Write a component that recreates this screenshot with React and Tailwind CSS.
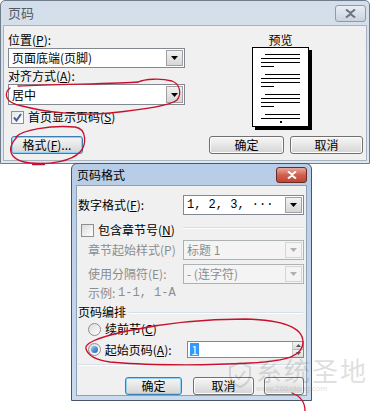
import React from "react";

const F = { fontFamily: '"Noto Sans CJK SC", "Liberation Sans", sans-serif' };

function WinBtn({ children, w, focus }) {
  return (
    <div
      className={`h-[18px] flex items-center justify-center rounded-[3px] border text-[12px] leading-none text-black bg-gradient-to-b from-[#f6f6f6] via-[#e6e6e6] to-[#d4d4d4] ${
        focus ? "border-[#3c7fb1] shadow-[inset_0_0_0_1px_#8fd0f4]" : "border-[#707070] shadow-[inset_0_0_0_1px_#fcfcfc]"
      }`}
      style={{ width: w }}
    >
      {children}
    </div>
  );
}

function Combo({ text, w, h = 20, disabled, mono }) {
  return (
    <div
      className={`flex items-stretch border ${disabled ? "border-[#adb2b5] bg-[#f4f4f4]" : "border-[#828790] bg-white"}`}
      style={{ width: w, height: h }}
    >
      <div
        className={`flex-1 flex items-center pl-[3px] text-[12px] leading-none ${disabled ? "text-[#8d8d8d]" : "text-black"}`}
        style={mono ? { fontFamily: '"Liberation Mono", "Noto Sans CJK SC", monospace' } : undefined}
      >
        {text}
      </div>
      <div
        className={`w-[17px] m-[1px] flex items-center justify-center border ${
          disabled ? "border-[#d5d5d5] bg-[#f4f4f4]" : "border-[#a0a0a0] bg-gradient-to-b from-[#f2f2f2] to-[#d6d6d6]"
        }`}
      >
        <svg width="7" height="4" viewBox="0 0 7 4">
          <path d="M0 0H7L3.5 4Z" fill={disabled ? "#b0b0b0" : "#000"} />
        </svg>
      </div>
    </div>
  );
}

function PagePreview() {
  const groups = [7, 27, 47];
  return (
    <div className="w-[57px] h-[80px] bg-white border border-black shadow-[3px_3px_0_0_#000]">
      <svg width="55" height="78" viewBox="0 0 55 78">
        <g stroke="#000" strokeWidth="1">
          {groups.map((y) => (
            <g key={y}>
              <line x1="12" y1={y - 0.5} x2="47" y2={y - 0.5} />
              <line x1="8" y1={y + 3.5} x2="47" y2={y + 3.5} />
              <line x1="8" y1={y + 7.5} x2="47" y2={y + 7.5} />
              <line x1="8" y1={y + 11.5} x2="21" y2={y + 11.5} />
            </g>
          ))}
          <line x1="12" y1="66.5" x2="47" y2="66.5" />
          <line x1="8" y1="70.5" x2="47" y2="70.5" />
        </g>
        <rect x="27" y="73" width="2" height="2" fill="#000" />
      </svg>
    </div>
  );
}

function U({ c }) {
  return <span className="underline">{c}</span>;
}

function TopDialog() {
  return (
    <div className="absolute left-0 top-0 w-[370px] h-[164px] border border-[#6f7c8b] rounded-t-[5px] bg-gradient-to-b from-[#d3deea] to-[#dfe7f0] flex flex-col">
      <div className="h-[24px] flex items-center justify-between pl-[7px] pr-[3px]">
        <span className="text-[13px] text-[#4f5a66]">页码</span>
        <div className="w-[31px] h-[17px] rounded-[3px] border border-[#8e9aa8] bg-gradient-to-b from-[#e9eef4] to-[#c9d3de] flex items-center justify-center">
          <svg width="11" height="9" viewBox="0 0 11 9">
            <path d="M1 0.5L5.5 4L10 0.5M1 8.5L5.5 5L10 8.5" stroke="#68737f" strokeWidth="2" fill="none" />
          </svg>
        </div>
      </div>
      <div className="flex-1 mx-[2px] mb-[2px] bg-[#f0f0f0] border border-[#a7b3c0] flex flex-col">
        <div className="flex">
          <div className="w-[181px] pl-[4px] pt-[7px] flex flex-col">
            <div className="h-[14px] flex items-center text-[12px] leading-none">位置(<U c="P" />):</div>
            <div className="mt-[1px]">
              <Combo text="页面底端(页脚)" w={177} />
            </div>
            <div className="mt-[1px] h-[14px] flex items-center text-[12px] leading-none">对齐方式(<U c="A" />):</div>
            <div className="mt-[1px]">
              <Combo text="居中" w={177} h={21} />
            </div>
            <div className="mt-[5px] h-[14px] flex items-center pl-[3px] text-[12px] leading-none">
              <div className="w-[13px] h-[13px] border border-[#8e8f8f] bg-gradient-to-br from-[#e4e6e8] to-white flex items-center justify-center">
                <svg width="9" height="9" viewBox="0 0 9 9">
                  <path d="M1 4.5L3.5 7.5L8 1" stroke="#4a5f97" strokeWidth="2" fill="none" />
                </svg>
              </div>
              <span className="ml-[4px]">首页显示页码(<U c="S" />)</span>
            </div>
          </div>
          <div className="ml-[67px] w-[60px] pt-[7px] flex flex-col items-start">
            <div className="w-[57px] h-[14px] flex items-center justify-center text-[12px] leading-none">预览</div>
            <PagePreview />
          </div>
        </div>
        <div className="mt-[9px] flex items-center pl-[7px]">
          <WinBtn w={72} focus>
            格式(<U c="F" />)...
          </WinBtn>
          <div className="ml-[126px]">
            <WinBtn w={75}>确定</WinBtn>
          </div>
          <div className="ml-[6px]">
            <WinBtn w={73}>取消</WinBtn>
          </div>
        </div>
      </div>
    </div>
  );
}

function Sep({ className = "" }) {
  return <div className={`h-[2px] border-t border-[#d5dfe5] border-b border-b-white ${className}`} />;
}

function Radio({ checked }) {
  return (
    <div className="w-[13px] h-[13px] rounded-full border border-[#8e8f8f] bg-gradient-to-br from-[#dcdcdc] to-white flex items-center justify-center">
      {checked && <div className="w-[7px] h-[7px] rounded-full bg-gradient-to-br from-[#8fd0ff] to-[#1b5fa8]" />}
    </div>
  );
}

function FormatDialog() {
  const lbl = "text-[12px] leading-none";
  return (
    <div className="absolute left-[71px] top-[163px] w-[241px] h-[238px] border border-[#4a5563] rounded-t-[6px] bg-gradient-to-b from-[#b7cce6] to-[#cadbee] flex flex-col">
      <div className="h-[21px] flex items-center justify-between pl-[5px] pr-[4px]">
        <span className="text-[12px] text-black">页码格式</span>
        <div className="w-[31px] h-[16px] rounded-[3px] border border-[#6d2a22] bg-gradient-to-b from-[#e8a89c] via-[#d0604f] to-[#c04434] flex items-center justify-center">
          <svg width="10" height="8" viewBox="0 0 10 8">
            <path d="M1 0.5L5 3.5L9 0.5M1 7.5L5 4.5L9 7.5" stroke="#fff" strokeWidth="2" fill="none" />
          </svg>
        </div>
      </div>
      <div className="flex-1 mx-[4px] mb-[4px] bg-[#f0f0f0] border border-[#8ea1b8] flex flex-col pl-[1px] pr-[2px] overflow-hidden">
        <div className="mt-[9px] flex items-center">
          <div className={`w-[105px] ${lbl}`}>数字格式(<U c="F" />):</div>
          <Combo text="1, 2, 3, ···" w={121} mono />
        </div>
        <div className="mt-[6px] h-[18px] flex items-center">
          <div className="w-[105px] flex items-center pl-[3px]">
            <div className="w-[13px] h-[13px] border border-[#8e8f8f] bg-gradient-to-br from-[#dcdcdc] to-white" />
            <span className={`ml-[4px] ${lbl}`}>包含章节号(<U c="N" />)</span>
          </div>
          <Sep className="w-[121px] mt-[-5px]" />
        </div>
        <div className="mt-[1px] flex items-center">
          <div className={`w-[105px] pl-[10px] text-[#8d8d8d] ${lbl}`}>章节起始样式(P)</div>
          <Combo text="标题 1" w={121} disabled />
        </div>
        <div className="mt-[4px] flex items-center">
          <div className={`w-[105px] pl-[10px] text-[#8d8d8d] ${lbl}`}>使用分隔符(E):</div>
          <Combo text="-  (连字符)" w={121} disabled />
        </div>
        <div className={`mt-[2px] h-[14px] flex items-center pl-[10px] text-[#8d8d8d] ${lbl}`}>
          示例:&nbsp;<span style={{ fontFamily: '"Liberation Mono", monospace' }}>1-1, 1-A</span>
        </div>
        <div className="mt-[5px] h-[14px] flex items-center">
          <span className={lbl}>页码编排</span>
          <Sep className="flex-1 ml-[3px] mt-[2px] mr-[1px]" />
        </div>
        <div className="mt-[3px] h-[14px] flex items-center pl-[10px]">
          <Radio />
          <span className={`ml-[4px] ${lbl}`}>续前节(<U c="C" />)</span>
        </div>
        <div className="mt-[5px] h-[17px] flex items-center pl-[10px]">
          <Radio checked />
          <span className={`ml-[4px] w-[84px] ${lbl}`}>起始页码(<U c="A" />):</span>
          <div className="w-[119px] h-[17px] border border-[#828790] bg-white flex">
            <div className="flex-1 flex items-center pl-[2px]">
              <span className="bg-[#3399ff] text-white text-[12px] leading-[13px] px-[1px]">1</span>
            </div>
            <div className="w-[11px] flex flex-col border-l border-[#c8c8c8]">
              <div className="flex-1 bg-gradient-to-b from-[#f4f4f4] to-[#dcdcdc] border-b border-[#b4b4b4] flex items-center justify-center">
                <svg width="5" height="3" viewBox="0 0 5 3"><path d="M0 3H5L2.5 0Z" fill="#555" /></svg>
              </div>
              <div className="flex-1 bg-gradient-to-b from-[#f4f4f4] to-[#dcdcdc] flex items-center justify-center">
                <svg width="5" height="3" viewBox="0 0 5 3"><path d="M0 0H5L2.5 3Z" fill="#555" /></svg>
              </div>
            </div>
          </div>
        </div>
        <Sep className="mt-[6px]" />
        <div className="mt-[11px] flex items-center pl-[47px]">
          <WinBtn w={71} focus>确定</WinBtn>
          <div className="ml-[11px]">
            <WinBtn w={61}>取消</WinBtn>
          </div>
          <div className="ml-[10px] shrink-0">
            <WinBtn w={40}>{""}</WinBtn>
          </div>
        </div>
      </div>
    </div>
  );
}

function Annotations() {
  return (
    <svg className="absolute left-0 top-0 pointer-events-none" width="372" height="411" viewBox="0 0 372 411">
      <g fill="none" stroke="#c8102e" strokeWidth="1.3" strokeLinecap="round">
        <path d="M10 88 C 4 93, 4 103, 22 106 C 45 112, 80 116, 110 113 C 140 110, 170 106, 177 100 C 182 94, 180 84, 172 81 C 160 78, 145 79, 138 82" />
        <path d="M138 82 C 120 84, 60 84, 18 86" />
        <path d="M16 137 C 22 130, 50 125, 75 127 C 88 129, 86 146, 80 152 C 72 161, 50 165, 30 163 C 12 161, 8 152, 12 144 C 14 140, 16 138, 17 137" />
        <path d="M33 164 L 44 164" strokeWidth="2.5" />
        <path d="M86 349 C 84 344, 95 338, 127 331 C 160 324, 200 319, 245 319 C 285 320, 303 328, 303 342 C 303 355, 290 361, 250 363 C 200 366, 140 365, 110 362 C 95 360, 88 355, 86 349" />
        <path d="M292 393 C 300 396, 305 402, 305 411" />
      </g>
    </svg>
  );
}

export default function App() {
  return (
    <div className="relative w-[372px] h-[411px] bg-white overflow-hidden" style={F}>
      <TopDialog />
      <FormatDialog />
      <div className="absolute left-[228px] top-[356px] flex items-center opacity-[0.18] pointer-events-none">
        <svg width="24" height="26" viewBox="0 0 24 26">
          <path d="M12 1L22 5V13C22 19 17 23 12 25C7 23 2 19 2 13V5Z" fill="none" stroke="#555" strokeWidth="2" />
          <path d="M7 13L11 17L17 9" fill="none" stroke="#555" strokeWidth="2" />
        </svg>
        <div className="ml-[4px] flex flex-col">
          <span className="text-[26px] leading-[28px] text-[#555] tracking-[2px]">系统圣地</span>
          <span className="text-[8px] leading-[9px] text-[#555]" style={{ fontFamily: '"Liberation Sans", sans-serif' }}>www.286xitong.com</span>
        </div>
      </div>
      <Annotations />
    </div>
  );
}
